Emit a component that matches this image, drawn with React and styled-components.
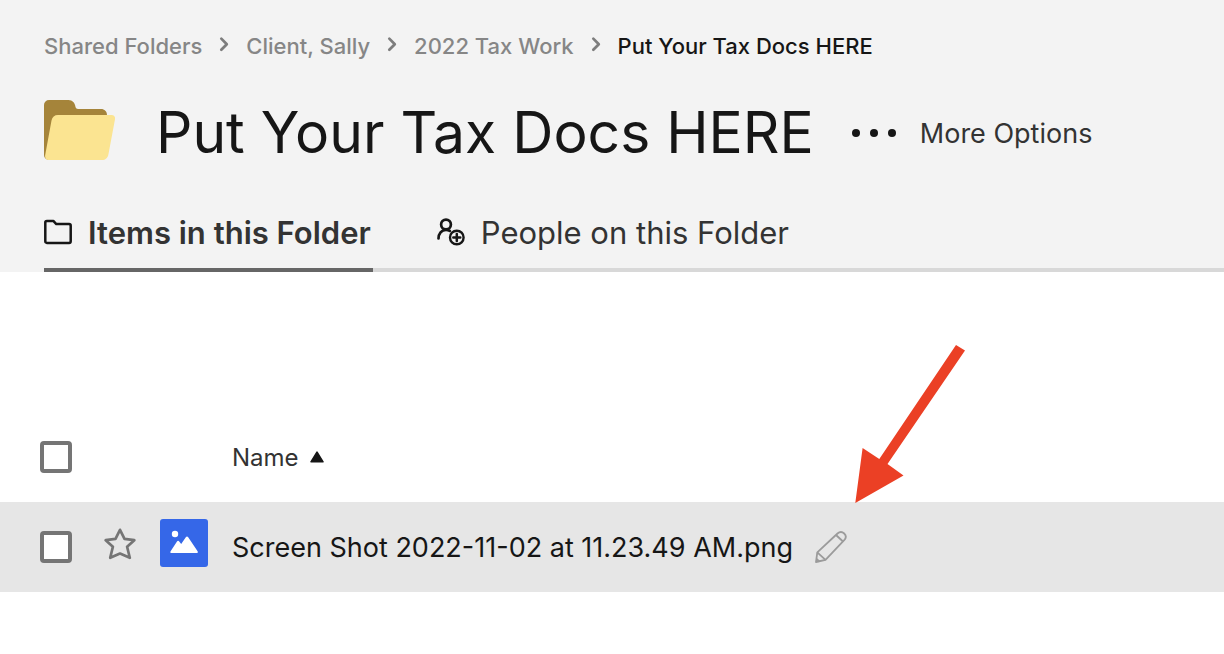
import React, { useState } from "react";
import styled, { createGlobalStyle } from "styled-components";

const crumbs = ["Shared Folders", "Client, Sally", "2022 Tax Work"];
const files = [{ id: 1, name: "Screen Shot 2022-11-02 at 11.23.49 AM.png" }];

export default function App() {
  const [tab, setTab] = useState("items");
  const [selected, setSelected] = useState([]);

  const toggleFile = (id) => {
    setSelected(
      selected.includes(id) ? selected.filter((s) => s !== id) : [...selected, id]
    );
  };

  const toggleAll = () => {
    setSelected(selected.length === files.length ? [] : files.map((f) => f.id));
  };

  return (
    <>
      <GlobalStyle />
      <Header>
        <Breadcrumbs aria-label="Breadcrumb">
          {crumbs.map((crumb) => (
            <React.Fragment key={crumb}>
              <a href="#">{crumb}</a>
              <ChevronIcon />
            </React.Fragment>
          ))}
          <span aria-current="page">Put Your Tax Docs HERE</span>
        </Breadcrumbs>
        <TitleBar>
          <FolderArt />
          <h1>Put Your Tax Docs HERE</h1>
          <MoreButton type="button">
            <DotsIcon />
            More Options
          </MoreButton>
        </TitleBar>
        <Tabs role="tablist">
          <Tab
            type="button"
            role="tab"
            aria-selected={tab === "items"}
            $active={tab === "items"}
            onClick={() => setTab("items")}
          >
            <FolderIcon />
            Items in this Folder
          </Tab>
          <Tab
            type="button"
            role="tab"
            aria-selected={tab === "people"}
            $active={tab === "people"}
            onClick={() => setTab("people")}
          >
            <PeopleIcon />
            People on this Folder
          </Tab>
        </Tabs>
      </Header>
      <FileTable>
        <thead>
          <tr>
            <CheckCell as="th">
              <Checkbox
                aria-label="Select all items"
                checked={selected.length === files.length}
                onChange={toggleAll}
              />
            </CheckCell>
            <StarCell />
            <TypeCell />
            <NameHead scope="col" aria-sort="ascending">
              <SortButton type="button">
                Name
                <SortIcon />
              </SortButton>
            </NameHead>
          </tr>
        </thead>
        <tbody>
          {files.map((file) => (
            <FileRow key={file.id}>
              <CheckCell>
                <Checkbox
                  aria-label={file.name}
                  checked={selected.includes(file.id)}
                  onChange={() => toggleFile(file.id)}
                />
              </CheckCell>
              <StarCell>
                <IconButton type="button" aria-label="Add to favorites">
                  <StarIcon />
                </IconButton>
              </StarCell>
              <TypeCell>
                <ImageIcon />
              </TypeCell>
              <NameCell>
                <FileName>
                  <a href="#">{file.name}</a>
                  <EditSpot>
                    <IconButton type="button" aria-label="Edit name">
                      <PencilIcon />
                    </IconButton>
                    <Arrow />
                  </EditSpot>
                </FileName>
              </NameCell>
            </FileRow>
          ))}
        </tbody>
      </FileTable>
    </>
  );
}

const ChevronIcon = () => (
  <svg width="10" height="16" viewBox="0 0 10 16" aria-hidden="true">
    <path d="M2.300 2.600L7.800 8.200 2.300 13.800" fill="none" stroke="#7d7d7d" strokeWidth="2.700" strokeLinecap="round" strokeLinejoin="round" />
  </svg>
);

const FolderArt = () => (
  <svg width="72" height="60" viewBox="0 0 72 60" aria-hidden="true">
    <path d="M0 55V5a5 5 0 0 1 5-5h19.500c4 0 6.500 3 7 7 .3 1.300 1.300 2 2.500 2h23c3.500 0 6 2.500 6 6v10L5 60a5 5 0 0 1-5-5z" fill="#a5843a" />
    <path d="M14 15h53.500c2.500 0 4 1.800 3.500 4.300l-6.600 35.200c-.6 3.500-3 5.500-6.400 5.500H5c-2.800 0-4.300-2-3.800-5L7.500 20.500c.7-3.500 3-5.500 6.500-5.500z" fill="#fbe491" />
  </svg>
);

const DotsIcon = () => (
  <svg width="44" height="8" viewBox="0 0 44 8" fill="#161616" aria-hidden="true">
    <circle cx="4" cy="4" r="4" />
    <circle cx="22" cy="4" r="4" />
    <circle cx="40" cy="4" r="4" />
  </svg>
);

const FolderIcon = () => (
  <svg width="28" height="28" viewBox="0 0 28 28" aria-hidden="true">
    <path d="M1.300 4.500c0-1 .6-1.600 1.600-1.600h6.400l3 3.200h12.800c1 0 1.600.6 1.600 1.600v15.600c0 1-.6 1.600-1.600 1.600H2.900c-1 0-1.600-.6-1.600-1.600z" fill="none" stroke="#161616" strokeWidth="2.500" strokeLinejoin="round" />
  </svg>
);

const PeopleIcon = () => (
  <svg width="28" height="28" viewBox="0 0 28 28" fill="none" stroke="#161616" strokeWidth="2.700" strokeLinecap="round" aria-hidden="true">
    <circle cx="9" cy="6.500" r="4.900" />
    <path d="M1.500 20.500c0-5 3-8.700 7.500-8.700 1.500 0 2.800.4 3.800 1.100" />
    <circle cx="19.800" cy="19.500" r="6.800" strokeWidth="2.400" />
    <path d="M19.800 16v7M16.300 19.500h7" strokeWidth="2.500" />
  </svg>
);

const SortIcon = () => (
  <svg width="14" height="12" viewBox="0 0 14 12" aria-hidden="true">
    <path d="M7 1.200L13 10.800H1z" fill="#161616" stroke="#161616" strokeWidth="1.600" strokeLinejoin="round" />
  </svg>
);

const StarIcon = () => (
  <svg width="32" height="32" viewBox="0 0 32 32" aria-hidden="true">
    <path d="M16 1.800l4.500 9 9.800 1.400-7.200 6.600 2.700 11L16 25.500l-9.800 4.300 2.700-11-7.200-6.600 9.800-1.400z" fill="none" stroke="#757575" strokeWidth="2.700" strokeLinejoin="round" />
  </svg>
);

const ImageIcon = () => (
  <svg width="48" height="48" viewBox="0 0 48 48" aria-label="Image" role="img">
    <rect width="48" height="48" rx="3" fill="#3567e8" />
    <circle cx="15" cy="15" r="3.200" fill="#fff" />
    <path d="M10.600 32.200L17 22.500c.6-.9 1.600-.9 2.200 0l2 2.500 4.600-6.800c.7-.9 1.700-.9 2.400 0l9.400 14c.6 1 .1 1.800-1 1.800H11.500c-1.100 0-1.500-.9-.9-1.800z" fill="#fff" />
  </svg>
);

const PencilIcon = () => (
  <svg width="32" height="32" viewBox="0 0 32 32" fill="none" stroke="#9b9b9b" strokeWidth="1.800" strokeLinejoin="round" aria-hidden="true">
    <path d="M1 31l1.300-9.700L22.500 2.500c2.300-2 4.800-1.800 6.700 0s2 4.500 0 6.700L10.500 28.800z" />
    <path d="M2.300 21.300l8.200 7.500M21 4l7 6.500M1.500 28l3 2.500" />
  </svg>
);

const Arrow = () => (
  <ArrowSvg width="110" height="158" viewBox="0 0 110 158" aria-hidden="true">
    <path d="M101 0l9 5.500-77.500 113.500L48.500 130.500.3 158 7.600 103l16.700 11z" fill="#eb4025" />
  </ArrowSvg>
);

const GlobalStyle = createGlobalStyle`
  body {
    margin: 0;
    background-color: #ffffff;
    color: #161616;
    font-family: Inter, "Liberation Sans", sans-serif;
  }
  button {
    font: inherit;
    color: inherit;
    background: none;
    border: none;
    padding: 0;
    cursor: pointer;
  }
  a {
    color: inherit;
    text-decoration: none;
  }
  svg {
    display: block;
    flex-shrink: 0;
  }
`;

const Header = styled.header`
  padding: 28px 0 0 44px;
  background-color: #f3f3f3;
  white-space: nowrap;
`;

const Breadcrumbs = styled.nav`
  display: flex;
  align-items: center;
  gap: 17px;
  font-size: 22px;
  font-weight: 500;
  line-height: 36px;
  a {
    color: #868686;
  }
  svg {
    margin-bottom: 4px;
  }
`;

const TitleBar = styled.div`
  display: flex;
  align-items: center;
  margin: 33px 0 27px;
  > svg {
    margin-bottom: 6px;
  }
  h1 {
    margin: 0 38px 0 40px;
    font-size: 57px;
    font-weight: 400;
    line-height: 72px;
  }
`;

const MoreButton = styled.button`
  display: flex;
  align-items: center;
  gap: 24px;
  color: #333333;
  font-size: 27px;
`;

const Tabs = styled.div`
  display: flex;
  gap: 64px;
  box-shadow: inset 0 -4px #d8d8d8;
`;

const Tab = styled.button`
  display: flex;
  align-items: center;
  gap: 16px;
  height: 76px;
  padding-right: 2px;
  border-bottom: 4px solid ${({ $active }) => ($active ? "#666666" : "transparent")};
  color: #333333;
  font-size: 31px;
  font-weight: ${({ $active }) => ($active ? 600 : 400)};
`;

const FileTable = styled.table`
  width: 100%;
  margin-top: 140px;
  border-collapse: collapse;
  table-layout: fixed;
  tr {
    height: 90px;
  }
  th,
  td {
    padding: 0;
    text-align: left;
    vertical-align: middle;
  }
`;

const FileRow = styled.tr`
  background-color: #e6e6e6;
`;

const CheckCell = styled.td`
  width: 104px;
`;

const StarCell = styled.td`
  width: 56px;
  svg {
    margin-bottom: 6px;
  }
`;

const TypeCell = styled.td`
  width: 72px;
  svg {
    margin-bottom: 8px;
  }
`;

const NameHead = styled.th`
  font-size: 24px;
  font-weight: 400;
`;

const NameCell = styled.td`
  font-size: 27px;
`;

const Checkbox = styled.input.attrs({ type: "checkbox" })`
  appearance: none;
  display: block;
  box-sizing: border-box;
  width: 32px;
  height: 32px;
  margin: 0 0 0 40px;
  border: 4px solid #757575;
  border-radius: 4px;
  background-color: #ffffff;
  cursor: pointer;
  &:checked {
    background-color: #757575;
  }
`;

const SortButton = styled.button`
  display: flex;
  align-items: center;
  gap: 11px;
  color: #333333;
`;

const IconButton = styled.button`
  display: block;
`;

const FileName = styled.div`
  display: flex;
  align-items: center;
  gap: 22px;
  white-space: nowrap;
`;

const EditSpot = styled.span`
  position: relative;
`;

const ArrowSvg = styled.svg`
  position: absolute;
  left: 40px;
  bottom: 60px;
  pointer-events: none;
`;
